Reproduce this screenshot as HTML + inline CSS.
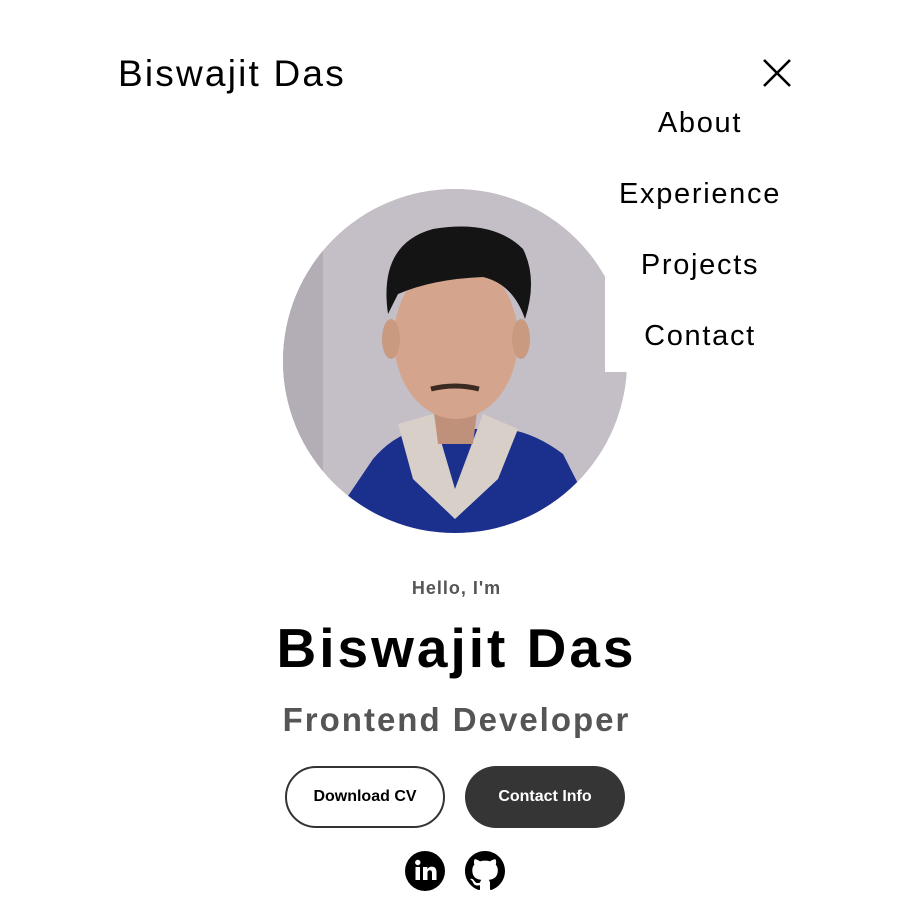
<!DOCTYPE html>
<html><head><style>
body{margin:0;width:913px;height:913px;background:#fff;font-family:"Liberation Sans",sans-serif;position:relative;overflow:hidden}
.abs{position:absolute}
.logo{left:118px;top:53px;font-size:37px;color:#000;letter-spacing:2.2px}
.menu{left:605px;top:100px;width:190px;height:272px;background:#fff}
.menu div{position:absolute;width:190px;text-align:center;font-size:29px;color:#000;left:0;letter-spacing:1.7px}
.photo{left:283px;top:189px;width:344px;height:344px;border-radius:50%;overflow:hidden;background:#c2bcc3}
.t{width:913px;text-align:center;left:0}
.btn{top:766px;height:62px;border-radius:31px;font-weight:bold;font-size:16px;display:flex;align-items:center;justify-content:center;box-sizing:border-box}
</style></head><body>
<div class="abs logo">Biswajit Das</div>
<svg class="abs" style="left:762px;top:58px" width="30" height="30"><path d="M2 2L28 28M28 2L2 28" stroke="#000" stroke-width="2.6"/></svg>
<div class="abs photo">
 <svg width="344" height="344" viewBox="0 0 344 344">
  <rect width="344" height="344" fill="#c4bec6"/>
  <rect x="0" width="40" height="344" fill="#b3adb5"/>
  <path d="M90 270 Q120 235 160 240 L200 240 Q240 235 280 265 L320 344 L40 344Z" fill="#1b2f8c"/>
  <path d="M115 235 L150 225 L172 300 L200 225 L235 240 L215 290 L172 330 L130 290Z" fill="#d8d0c8"/>
  <path d="M150 215 L195 215 L190 255 L155 255Z" fill="#c0917a"/>
  <ellipse cx="173" cy="150" rx="62" ry="80" fill="#d4a58c"/>
  <path d="M105 125 Q95 55 150 40 Q210 30 240 60 Q255 90 242 130 Q230 95 200 88 Q150 90 115 105 Z" fill="#141414"/>
  <ellipse cx="108" cy="150" rx="9" ry="20" fill="#c99a80"/>
  <ellipse cx="238" cy="150" rx="9" ry="20" fill="#c99a80"/>
  <path d="M148 200 Q172 194 196 200" stroke="#3a2a22" stroke-width="5" fill="none"/>
 </svg>
</div>
<div class="abs menu">
 <div style="top:7px">About</div>
 <div style="top:78px">Experience</div>
 <div style="top:149px">Projects</div>
 <div style="top:220px">Contact</div>
</div>
<div class="abs t" style="top:578px;font-size:18px;font-weight:bold;color:#555;letter-spacing:1px">Hello, I'm</div>
<div class="abs t" style="top:616px;font-size:55px;font-weight:bold;color:#000;letter-spacing:3px">Biswajit Das</div>
<div class="abs t" style="top:701px;font-size:33px;font-weight:bold;color:#555;letter-spacing:2px">Frontend Developer</div>
<div class="abs btn" style="left:285px;width:160px;border:2px solid #333;color:#000">Download CV</div>
<div class="abs btn" style="left:465px;width:160px;background:#353535;color:#fff">Contact Info</div>
<svg class="abs" style="left:405px;top:851px" width="40" height="40" viewBox="0 0 40 40"><circle cx="20" cy="20" r="20" fill="#000"/><rect x="10.5" y="16" width="4.5" height="13" fill="#fff"/><circle cx="12.8" cy="11.5" r="2.7" fill="#fff"/><path d="M18 16h4.3v2c1-1.6 2.6-2.4 4.5-2.4 3.2 0 4.7 2 4.7 5.5V29h-4.5v-7c0-1.800-.6-2.8-2.2-2.8s-2.3 1.1-2.3 2.8v7H18z" fill="#fff"/></svg>
<svg class="abs" style="left:465px;top:851px" width="40" height="40" viewBox="0 0 16 16"><path fill="#000" d="M8 0C3.58 0 0 3.580 0 8c0 3.54 2.29 6.53 5.47 7.59.4.07.55-.17.55-.38 0-.19-.01-.82-.01-1.49-2.010.37-2.53-.49-2.69-.94-.09-.23-.48-.94-.82-1.13-.28-.15-.68-.52-.01-.53.63-.01 1.08.58 1.23.82.72 1.21 1.87.87 2.33.66.07-.52.28-.87.51-1.07-1.78-.2-3.64-.89-3.64-3.95 0-.87.31-1.59.82-2.15-.08-.2-.36-1.02.08-2.12 0 0 .67-.21 2.2.82.64-.18 1.32-.27 2-.27.68 0 1.36.09 2 .27 1.53-1.04 2.2-.82 2.2-.82.44 1.1.16 1.92.08 2.12.51.56.82 1.27.82 2.15 0 3.07-1.87 3.750-3.65 3.95.29.25.54.73.54 1.48 0 1.07-.01 1.93-.01 2.2 0 .21.15.46.55.38A8.013 8.013 0 0016 8c0-4.42-3.58-8-8-8z"/></svg>
</body></html>
